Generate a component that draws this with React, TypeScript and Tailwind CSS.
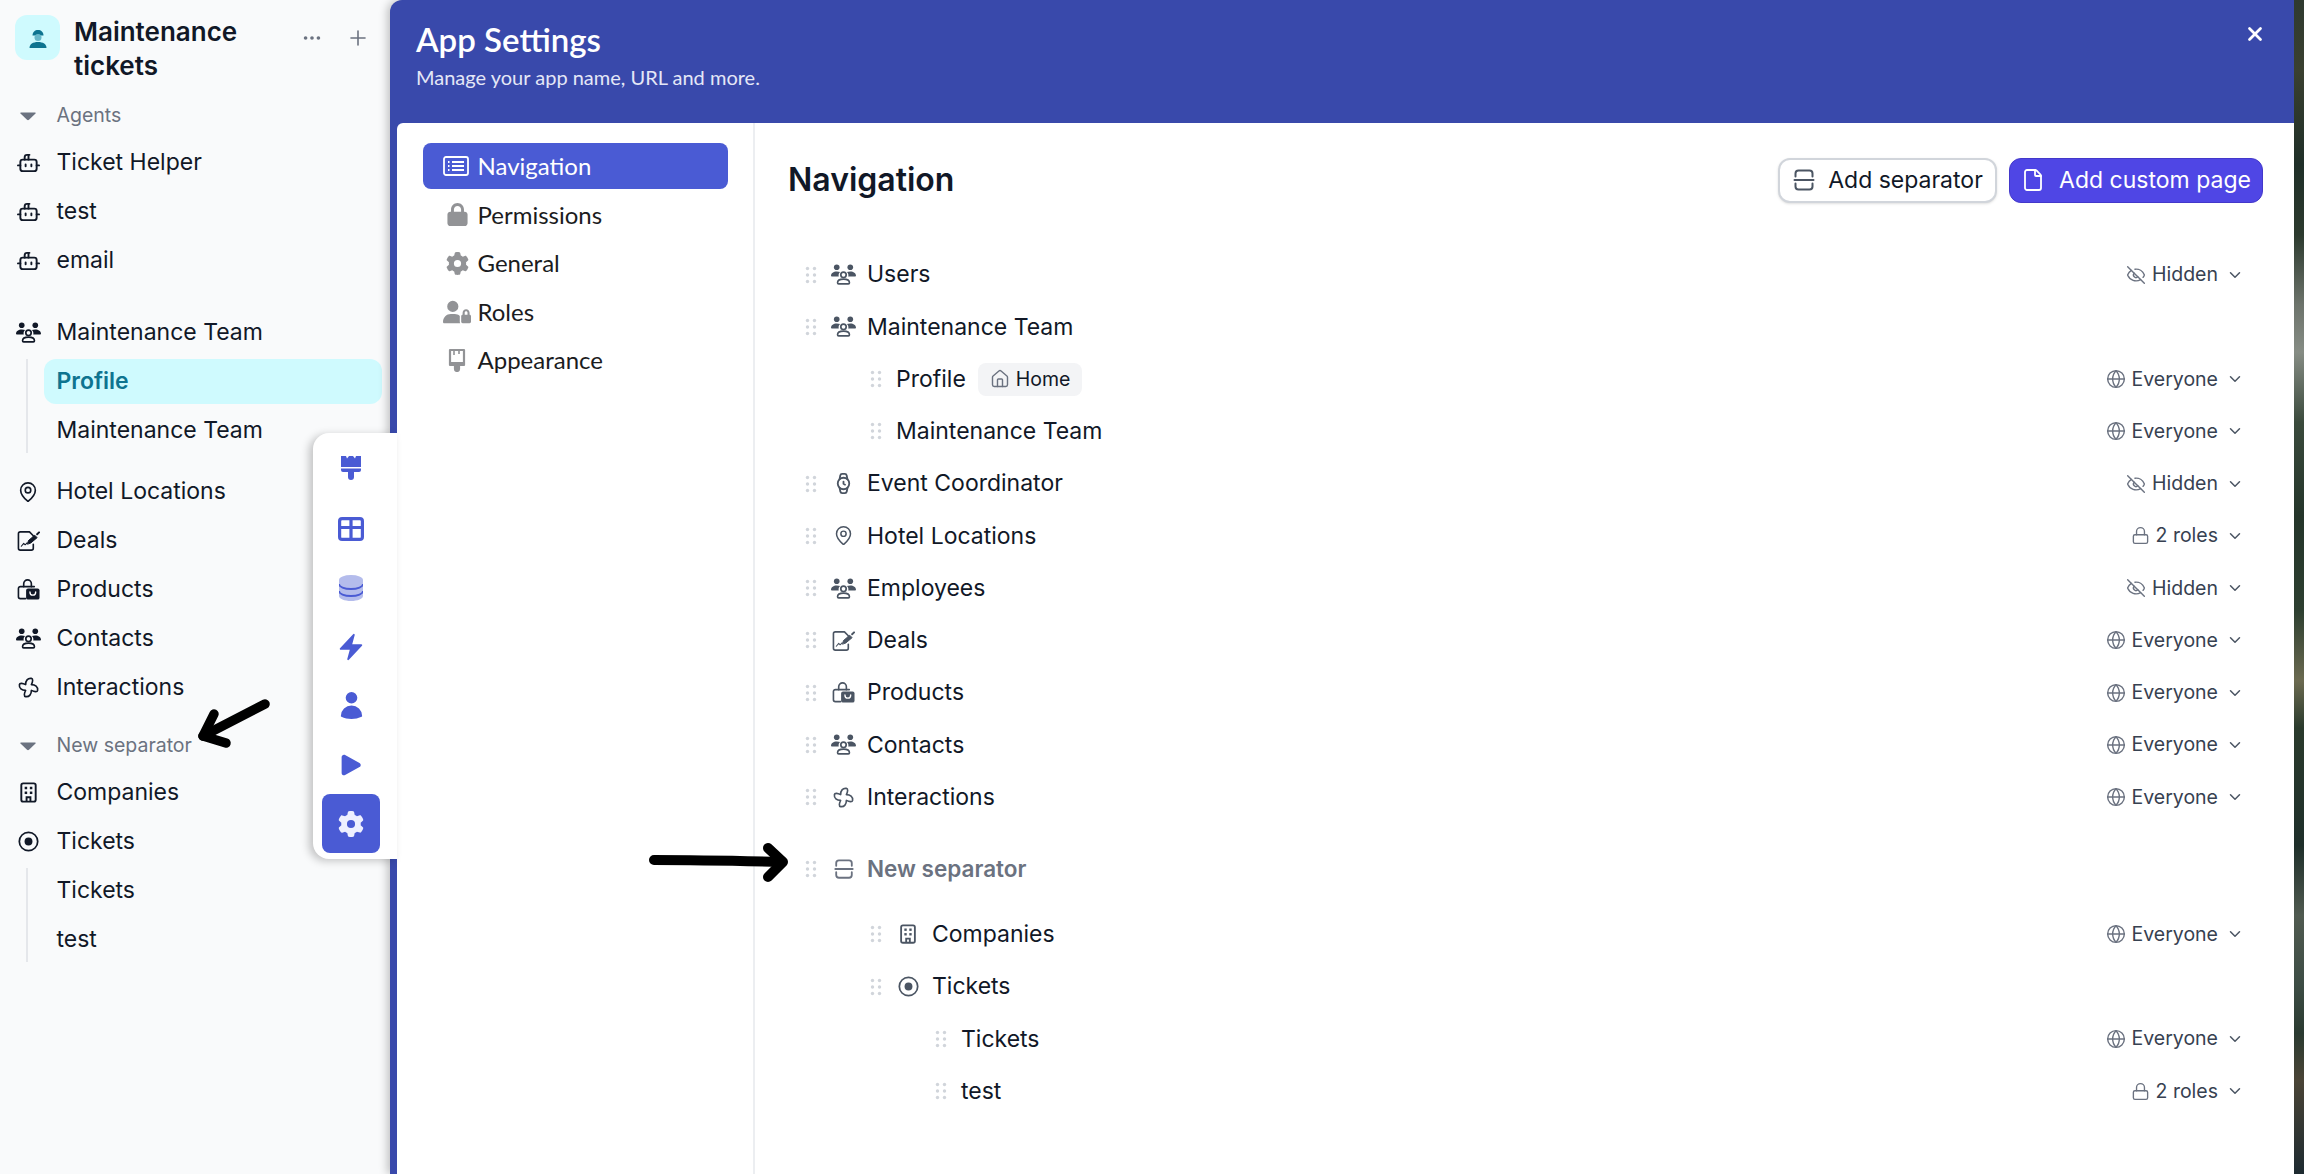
import type { ReactNode } from 'react';
import {
  ChevronDown,
  EllipsisIcon,
  EyeOff,
  File,
  Globe,
  House,
  Lock,
  MapPin,
  Plus,
  Watch,
  X,
} from 'lucide-react';
import { FaGear, FaLock, FaUserLock } from 'react-icons/fa6';
import { HiBolt, HiPlay, HiUser } from 'react-icons/hi2';

const inter = 'font-["Inter",sans-serif]';
const lato = 'font-["Lato",sans-serif]';

function BotIcon({ className }: { className?: string }) {
  return (
    <svg viewBox="0 0 24 24" fill="none" stroke="currentColor" strokeWidth="2" strokeLinecap="round" className={className}>
      <rect x="3.500" y="9" width="17" height="12" rx="2.500" />
      <path d="M8 9V6.500a2.500 2.500 0 0 1 2.500-2.500H13M12 4v5M1 15h2.500M20.500 15H23" />
      <path d="M9 14v2M15 14v2" />
    </svg>
  );
}

function GroupIcon({ className }: { className?: string }) {
  return (
    <svg viewBox="0 0 24 20" className={className}>
      <g fill="currentColor">
        <circle cx="5.500" cy="3" r="2.700" />
        <circle cx="18.500" cy="3" r="2.700" />
        <path d="M0 11.300C0 8.500 2.400 7 5.500 7c1.300 0 2.400.2 3.200.7-.9.800-1.400 1.900-1.400 3.100 0 .4 0 .8.200 1.200H.8c-.5 0-.8-.3-.8-.7z" />
        <path d="M24 11.300C24 8.500 21.600 7 18.500 7c-1.300 0-2.400.2-3.200.7.900.800 1.400 1.900 1.400 3.100 0 .4 0 .8-.2 1.200h6.700c.5 0 .8-.3.800-.7z" />
      </g>
      <g fill="none" stroke="currentColor" strokeWidth="1.600">
        <circle cx="12" cy="10.300" r="2.600" />
        <path d="M6.300 18c0-2.500 2.500-3.500 5.700-3.500s5.700 1 5.700 3.500c0 .6-.4 1-1 1H7.300c-.6 0-1-.4-1-1z" />
      </g>
    </svg>
  );
}

function DealsIcon({ className }: { className?: string }) {
  return (
    <svg viewBox="0 0 24 24" fill="none" stroke="currentColor" strokeWidth="1.700" strokeLinecap="round" strokeLinejoin="round" className={className}>
      <path d="M17 7.500V7l-4-4H3.500a2 2 0 0 0-2 2v15a2 2 0 0 0 2 2H15a2 2 0 0 0 2-2v-4" />
      <path d="M4.500 18l2.500-3 1.500 1.500 2-2" strokeWidth="1.100" />
      <path d="M11 15.500l1-3.500 6.500-5.500 2.500 2.500-6.500 5.500z" fill="currentColor" strokeWidth="1" />
      <path d="M21 5.500l2-2" strokeWidth="2" />
    </svg>
  );
}

function BagIcon({ className }: { className?: string }) {
  return (
    <svg viewBox="0 0 24 24" fill="none" stroke="currentColor" strokeWidth="1.700" strokeLinecap="round" className={className}>
      <path d="M7 9V6a4 4 0 0 1 8 0v3" />
      <path d="M9 21.500H3.500a2 2 0 0 1-2-2V11a2 2 0 0 1 2-2H18" />
      <rect x="9.500" y="11" width="14" height="11.500" rx="2" fill="currentColor" stroke="none" />
      <path d="M13.500 14.500c0 4.500 6 4.500 6 0" stroke="#fff" strokeWidth="1.400" />
    </svg>
  );
}

function PinwheelIcon({ className }: { className?: string }) {
  return (
    <svg viewBox="0 0 24 24" fill="none" stroke="currentColor" strokeWidth="1.700" strokeLinejoin="round" className={className}>
      <path d="M9 9C9 5 11 2 15 2.500C17 2.800 16.500 6 15 9C19 9 22 11 21.500 15C21.200 17 18 16.500 15 15C15 19 13 22 9 21.500C7 21.200 7.500 18 9 15C5 15 2 13 2.500 9C2.800 7 6 7.500 9 9Z" />
    </svg>
  );
}

function BuildingIcon({ className }: { className?: string }) {
  return (
    <svg viewBox="0 0 24 24" fill="none" stroke="currentColor" strokeWidth="2" className={className}>
      <rect x="4.500" y="2.500" width="15" height="19" rx="2" />
      <path d="M10 21v-4h4v4" />
      <g fill="currentColor" stroke="none">
        <rect x="8" y="6" width="2.600" height="2.600" />
        <rect x="13.400" y="6" width="2.600" height="2.600" />
        <rect x="8" y="11" width="2.600" height="2.600" />
        <rect x="13.400" y="11" width="2.600" height="2.600" />
      </g>
    </svg>
  );
}

function TargetIcon({ className }: { className?: string }) {
  return (
    <svg viewBox="0 0 24 24" className={className}>
      <circle cx="12" cy="12" r="10.500" fill="none" stroke="currentColor" strokeWidth="2" />
      <circle cx="12" cy="12" r="4.500" fill="currentColor" />
    </svg>
  );
}

function SeparatorIcon({ className }: { className?: string }) {
  return (
    <svg viewBox="0 0 24 24" fill="none" stroke="currentColor" strokeWidth="2" strokeLinecap="round" className={className}>
      <path d="M3.500 8.500V5.500a3 3 0 0 1 3-3h11a3 3 0 0 1 3 3v3" />
      <path d="M2.500 12h19" />
      <path d="M3.500 15.500v3a3 3 0 0 0 3 3h11a3 3 0 0 0 3-3v-3" />
    </svg>
  );
}

function Handle() {
  return (
    <svg viewBox="0 0 12 18" className="h-[18px] w-3 shrink-0 text-[#d1d5db]" fill="currentColor">
      <circle cx="2.500" cy="2.500" r="1.700" />
      <circle cx="9.500" cy="2.500" r="1.700" />
      <circle cx="2.500" cy="9" r="1.700" />
      <circle cx="9.500" cy="9" r="1.700" />
      <circle cx="2.500" cy="15.500" r="1.700" />
      <circle cx="9.500" cy="15.500" r="1.700" />
    </svg>
  );
}

function Caret() {
  return (
    <svg viewBox="0 0 16 10" className="h-[10px] w-4 text-[#6b7280]" fill="currentColor">
      <path d="M1 1.500h14c.6 0 .9.700.5 1.100L9 8.800c-.6.500-1.400.5-2 0L.5 2.600C.1 2.200.4 1.500 1 1.500z" />
    </svg>
  );
}

const sideIcon = 'h-[23px] w-[23px] text-[#111827]';

function SideRow({ icon, label }: { icon?: ReactNode; label: string }) {
  return (
    <div className="flex h-[45px] items-center gap-[14.5px] pl-[14px]">
      <span className="flex w-7 items-center justify-center">{icon}</span>
      <span>{label}</span>
    </div>
  );
}

function SubRows({ items, active }: { items: string[]; active?: string }) {
  return (
    <div className="ml-[26px] flex flex-col gap-1 border-l-2 border-[#e5e7eb] pl-4">
      {items.map((item) =>
        item === active ? (
          <div key={item} className="flex h-[45px] items-center rounded-xl bg-[#cffafe] pl-[12.5px] font-semibold text-[#0e7490]">
            {item}
          </div>
        ) : (
          <div key={item} className="flex h-[45px] items-center pl-[12.5px]">
            {item}
          </div>
        ),
      )}
    </div>
  );
}

function Sidebar() {
  return (
    <aside className={`w-[390px] shrink-0 bg-[#f9fafb] pr-2 text-[23px] text-[#111827] ${inter}`}>
      <div className="flex pl-[15px] pt-[15px]">
        <div className="flex h-[45px] w-[45px] items-center justify-center rounded-xl bg-[#cffafe]">
          <svg viewBox="0 0 24 24" className="h-[24px] w-[24px]">
            <path d="M6.500 9.500C6.500 6 9 4 12 4s5.500 2 5.500 5.500H6.500z" fill="#0e7490" />
            <circle cx="12" cy="11.500" r="3.500" fill="#67b7c9" />
            <path d="M3.500 22c0-4 3.500-6 8.500-6s8.500 2 8.500 6H3.500z" fill="#0e7490" />
          </svg>
        </div>
        <div className="ml-[14px] w-[180px] text-[26px] leading-[34px] font-semibold text-[#111827]">Maintenance tickets</div>
        <div className="ml-[47px] flex h-[45px] items-center gap-[23px] text-[#6b7280]">
          <EllipsisIcon size={22} />
          <Plus size={24} strokeWidth={1.6} />
        </div>
      </div>

      <div className="mt-[10px] flex h-[45px] items-center gap-[14.5px] pl-[14px] text-[19.5px] text-[#6b7280]">
        <span className="flex w-7 justify-center">
          <Caret />
        </span>
        Agents
      </div>
      <div className="mt-[2px] flex flex-col gap-1">
        <SideRow icon={<BotIcon className={sideIcon} />} label="Ticket Helper" />
        <SideRow icon={<BotIcon className={sideIcon} />} label="test" />
        <SideRow icon={<BotIcon className={sideIcon} />} label="email" />
      </div>

      <div className="mt-[27px] flex flex-col gap-1">
        <SideRow icon={<GroupIcon className="h-[21px] w-[25px] text-[#111827]" />} label="Maintenance Team" />
        <SubRows items={['Profile', 'Maintenance Team']} active="Profile" />
      </div>

      <div className="mt-4 flex flex-col gap-1">
        <SideRow icon={<MapPin size={22} strokeWidth={1.8} />} label="Hotel Locations" />
        <SideRow icon={<DealsIcon className={sideIcon} />} label="Deals" />
        <SideRow icon={<BagIcon className={sideIcon} />} label="Products" />
        <SideRow icon={<GroupIcon className="h-[21px] w-[25px] text-[#111827]" />} label="Contacts" />
        <SideRow icon={<PinwheelIcon className={sideIcon} />} label="Interactions" />
      </div>

      <div className="mt-[13px] flex h-[45px] items-center gap-[14.5px] pl-[14px] text-[19.5px] text-[#6b7280]">
        <span className="flex w-7 justify-center">
          <Caret />
        </span>
        New separator
      </div>
      <div className="mt-[2px] flex flex-col gap-1">
        <SideRow icon={<BuildingIcon className={sideIcon} />} label="Companies" />
        <SideRow icon={<TargetIcon className="h-[21px] w-[21px]" />} label="Tickets" />
        <SubRows items={['Tickets', 'test']} />
      </div>
    </aside>
  );
}

type Perm = 'hidden' | 'everyone' | 'roles';

function Permission({ kind }: { kind: Perm }) {
  const icon = {
    hidden: <EyeOff size={20} strokeWidth={1.7} className="text-[#6b7280]" />,
    everyone: <Globe size={20} strokeWidth={1.7} className="text-[#6b7280]" />,
    roles: <Lock size={19} strokeWidth={1.7} className="text-[#6b7280]" />,
  }[kind];
  const label = { hidden: 'Hidden', everyone: 'Everyone', roles: '2 roles' }[kind];
  return (
    <div className="ml-auto flex items-center text-[19.5px] text-[#374151]">
      <span className="mr-[6px]">{icon}</span>
      {label}
      <ChevronDown size={18} strokeWidth={2} className="ml-[8px] text-[#4b5563]" />
    </div>
  );
}

function NavRow({
  level = 0,
  icon,
  label,
  perm,
  badge,
}: {
  level?: 0 | 1 | 2;
  icon?: ReactNode;
  label: string;
  perm?: Perm;
  badge?: boolean;
}) {
  const indent = ['pl-0', 'pl-[65px]', 'pl-[130px]'][level];
  return (
    <div className={`flex h-[52.25px] items-center gap-[14px] ${indent}`}>
      <Handle />
      <div className="flex items-center gap-3">
        {icon && <span className="flex w-6 justify-center text-[#4b5563]">{icon}</span>}
        <span>{label}</span>
        {badge && (
          <span className="flex h-[33px] items-center gap-[6px] rounded-lg bg-[#f3f4f6] px-3 text-[19.5px]">
            <House size={20} strokeWidth={1.7} className="text-[#6b7280]" />
            Home
          </span>
        )}
      </div>
      {perm && <Permission kind={perm} />}
    </div>
  );
}

function NavList() {
  const group = <GroupIcon className="h-[21px] w-[25px] shrink-0" />;
  return (
    <div className={`mt-[44.5px] pl-[17px] pr-[19px] text-[23px] text-[#111827] ${inter}`}>
      <NavRow icon={group} label="Users" perm="hidden" />
      <NavRow icon={group} label="Maintenance Team" />
      <NavRow level={1} label="Profile" perm="everyone" badge />
      <NavRow level={1} label="Maintenance Team" perm="everyone" />
      <NavRow icon={<Watch size={23} strokeWidth={1.9} />} label="Event Coordinator" perm="hidden" />
      <NavRow icon={<MapPin size={21} strokeWidth={1.7} />} label="Hotel Locations" perm="roles" />
      <NavRow icon={group} label="Employees" perm="hidden" />
      <NavRow icon={<DealsIcon className="h-[23px] w-[23px]" />} label="Deals" perm="everyone" />
      <NavRow icon={<BagIcon className="h-[23px] w-[23px]" />} label="Products" perm="everyone" />
      <NavRow icon={group} label="Contacts" perm="everyone" />
      <NavRow icon={<PinwheelIcon className="h-[23px] w-[23px]" />} label="Interactions" perm="everyone" />
      <div className="mb-[13px] mt-5 flex h-[52px] items-center gap-[14px]">
        <Handle />
        <div className="flex items-center gap-3 text-[22.5px] font-semibold text-[#6b7280]">
          <span className="flex w-6 justify-center pl-[2px]">
            <SeparatorIcon className="h-[22px] w-[22px]" />
          </span>
          New separator
        </div>
      </div>
      <NavRow level={1} icon={<BuildingIcon className="h-[22px] w-[22px]" />} label="Companies" perm="everyone" />
      <NavRow level={1} icon={<TargetIcon className="h-[21px] w-[21px]" />} label="Tickets" />
      <NavRow level={2} label="Tickets" perm="everyone" />
      <NavRow level={2} label="test" perm="roles" />
    </div>
  );
}

function SettingsMenu() {
  const gray = 'text-[#929396]';
  const rows: { label: string; icon: ReactNode }[] = [
    { label: 'Permissions', icon: <FaLock size={23} className={gray} /> },
    { label: 'General', icon: <FaGear size={23} className={gray} /> },
    { label: 'Roles', icon: <FaUserLock size={28} className={gray} /> },
    {
      label: 'Appearance',
      icon: (
        <svg viewBox="0 0 24 24" className={`h-[24px] w-[24px] ${gray}`} fill="none" stroke="currentColor" strokeWidth="2.200">
          <path d="M5 2h14v13H5z" strokeLinejoin="round" />
          <path d="M5 15v2h5v4a2 2 0 0 0 4 0v-4h5v-2z" fill="currentColor" strokeLinejoin="round" />
          <path d="M9 3v4M14 3v3" strokeWidth="1.600" />
        </svg>
      ),
    },
  ];
  return (
    <nav className={`w-[358px] shrink-0 border-r-2 border-[#eceef1] pl-[26px] pr-[25px] pt-5 text-[24px] ${lato}`}>
      <div className="flex h-[46px] items-center gap-[8.5px] rounded-lg bg-[#4a5bd4] pl-[20px] text-white">
        <svg viewBox="0 0 26 20" className="h-[20px] w-[26px]" fill="none" stroke="currentColor" strokeWidth="1.800">
          <rect x="1" y="1" width="24" height="18" rx="2" />
          <path d="M9 6h12M9 10h12M9 14h12M5 6h1.500M5 10h1.500M5 14h1.500" />
        </svg>
        Navigation
      </div>
      <div className="mt-[2.5px] flex flex-col gap-[2.6px] text-[#1b1c1e]">
        {rows.map((row) => (
          <div key={row.label} className="flex h-[46px] items-center pl-[19px]">
            <span className="flex w-[30px] justify-center">{row.icon}</span>
            <span className="ml-[5.5px]">{row.label}</span>
          </div>
        ))}
      </div>
    </nav>
  );
}

function Toolbar() {
  const icon = 'text-[#4a5bd4]';
  return (
    <div className="absolute left-[313px] top-[433px] flex h-[426px] w-[84px] flex-col items-center rounded-l-2xl bg-white pr-[8px] shadow-[-4px_2px_8px_rgba(0,0,0,0.22)]">
      <div className="flex h-[66px] w-full items-center justify-center pt-[4px]">
        <svg viewBox="0 0 22 26" className={`h-[26px] w-[22px] ${icon}`} fill="currentColor">
          <path d="M1 1h5l1 2.500L9 1h4l2 2.500L16 1h5v11H1z" />
          <path d="M1 13.500h20V15a2 2 0 0 1-2 2h-5v5a3 3 0 0 1-6 0v-5H3a2 2 0 0 1-2-2z" />
        </svg>
      </div>
      <div className="flex h-[59px] w-full items-center justify-center">
        <svg viewBox="0 0 26 24" className={`h-[24px] w-[26px] ${icon}`} fill="none" stroke="currentColor" strokeWidth="3.200">
          <rect x="1.600" y="1.600" width="22.800" height="20.800" rx="2.500" />
          <path d="M1.600 10.500h22.800M13 1.600v20.800" />
        </svg>
      </div>
      <div className="flex h-[59px] w-full items-center justify-center">
        <svg viewBox="0 0 24 26" className="h-[26px] w-[24px]">
          <ellipse cx="12" cy="5" rx="12" ry="5" fill="#b4bcec" />
          <path d="M0 5v16c0 2.800 5.400 5 12 5s12-2.200 12-5V5z" fill="#b4bcec" />
          <path d="M0 9c0 2.800 5.400 5 12 5s12-2.200 12-5M0 16c0 2.800 5.400 5 12 5s12-2.200 12-5" fill="none" stroke="#4a5bd4" strokeWidth="1.800" />
        </svg>
      </div>
      <div className="flex h-[59px] w-full items-center justify-center">
        <HiBolt size={30} className={icon} />
      </div>
      <div className="flex h-[59px] w-full items-center justify-center">
        <HiUser size={31} className={icon} />
      </div>
      <div className="flex h-[59px] w-full items-center justify-center">
        <HiPlay size={30} className={icon} />
      </div>
      <div className="flex h-[59px] w-[58px] shrink-0 items-center justify-center rounded-lg bg-[#4a5bd4] text-[#eef0ff]">
        <FaGear size={26} />
      </div>
    </div>
  );
}

function Arrows() {
  return (
    <>
      <svg viewBox="0 0 90 60" className="absolute left-[190px] top-[693px] h-[60px] w-[90px]" fill="none" stroke="#000" strokeWidth="9.500" strokeLinecap="round" strokeLinejoin="round">
        <path d="M75 11 13 43" />
        <path d="M24 21 13 43l23 7" />
      </svg>
      <svg viewBox="0 0 150 50" className="absolute left-[645px] top-[838px] h-[50px] w-[150px]" fill="none" stroke="#000" strokeWidth="10" strokeLinecap="round" strokeLinejoin="round">
        <path d="M9 22c40 0 89 1 128 2" />
        <path d="M123 10l15 14-15 15" />
      </svg>
    </>
  );
}

export default function App() {
  return (
    <div className="relative flex h-[1174px] w-full overflow-hidden bg-[#f9fafb]">
      <Sidebar />
      <div className="flex flex-1 flex-col rounded-tl-xl bg-[#3949ab] shadow-[-3px_0_8px_rgba(0,0,0,0.22)]">
        <header className="relative h-[123px] shrink-0 pl-[26px] text-white">
          <h1 className={`pt-[19px] text-[33px] leading-10 font-semibold ${lato}`}>App Settings</h1>
          <p className={`mt-[4px] text-[20px] leading-7 text-[#e4e7f7] ${lato}`}>Manage your app name, URL and more.</p>
          <X size={22} strokeWidth={3} className="absolute right-[28px] top-[23px]" />
        </header>
        <div className="ml-[7px] flex flex-1 rounded-tl-md bg-white">
          <SettingsMenu />
          <main className="min-w-0 flex-1 pl-[33px] pr-[31px] pt-[33px]">
            <div className={`flex items-center justify-between ${inter}`}>
              <h2 className="text-[32px] font-semibold text-[#111827]">Navigation</h2>
              <div className="flex gap-3">
                <button className="flex h-[45px] w-[219px] items-center justify-center gap-[12px] rounded-xl border-2 border-[#d1d5db] bg-white text-[23px] text-[#111827] shadow-sm">
                  <SeparatorIcon className="h-[24px] w-[24px] text-[#4b5563]" />
                  Add separator
                </button>
                <button className="flex h-[45px] w-[254px] items-center justify-center gap-[14px] rounded-xl border border-[#4338ca] bg-[#4f46e5] text-[23px] text-white">
                  <File size={24} strokeWidth={1.8} />
                  Add custom page
                </button>
              </div>
            </div>
            <NavList />
          </main>
        </div>
      </div>
      <div className="w-[10px] shrink-0 bg-[linear-gradient(180deg,#2f3a2f_0%,#3a4030_6%,#1f2f28_14%,#2c3a2e_20%,#6d746c_26%,#868c84_30%,#3a4a3c_36%,#24352a_44%,#2d3f30_52%,#6b6a50_58%,#2a3a2c_62%,#1e2f2a_72%,#505a50_78%,#3c4c44_84%,#2a3a30_88%,#4a4436_92%,#1d2a30_100%)]" />
      <Toolbar />
      <Arrows />
    </div>
  );
}
